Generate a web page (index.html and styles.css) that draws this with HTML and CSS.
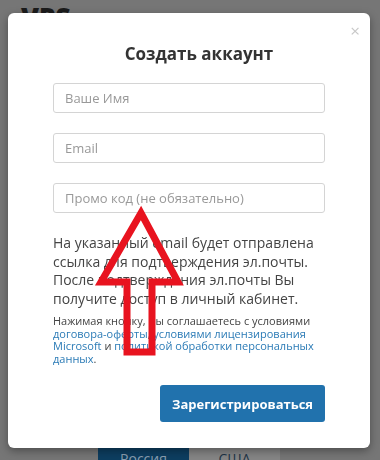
FILE: index.html
```html
<!DOCTYPE html>
<html lang="ru">
<head>
    <meta charset="UTF-8">
    <meta name="viewport" content="width=device-width, initial-scale=1.0">
    <title>Создать аккаунт</title>
    <link rel="stylesheet" href="styles.css">
</head>
<body>
    <div class="page">
        <div class="logo">VPS</div>
        <div class="tabs">
            <div class="tab active">Россия</div>
            <div class="tab">США</div>
        </div>
    </div>

    <div class="overlay">
        <div class="modal">
            <span class="close">&times;</span>
            <h2>Создать аккаунт</h2>

            <form class="form">
                <input type="text" placeholder="Ваше Имя">
                <input type="email" placeholder="Email">
                <input type="text" placeholder="Промо код (не обязательно)">
            </form>

            <p class="info">На указанный email будет отправлена ссылка для подтверждения эл.почты. После подтверждения эл.почты Вы получите доступ в личный кабинет.</p>

            <p class="terms">Нажимая кнопку, Вы соглашаетесь с условиями <a href="#">договора-оферты</a>, <a href="#">условиями лицензирования Microsoft</a> и <a href="#">политикой обработки персональных данных</a>.</p>

            <div class="actions">
                <button type="button">Зарегистрироваться</button>
            </div>
        </div>

        <svg class="arrow" width="380" height="460" viewBox="0 0 380 460">
            <polygon points="141,213 101,282 127,282 127,352 152,352 152,282 178,282" fill="none" stroke="#e8131f" stroke-width="7" stroke-linejoin="miter" stroke-miterlimit="10"/>
        </svg>
    </div>
</body>
</html>
```

FILE: styles.css
```css
body {
    margin: 0;
    font-family: 'Open Sans', 'Noto Sans', sans-serif;
    background: #767676;
    width: 380px;
    height: 460px;
    overflow: hidden;
}

.page {
    height: 460px;
    display: flex;
    flex-direction: column;
    justify-content: space-between;
}

.logo {
    font-size: 26px;
    font-weight: 800;
    color: #1b1b1b;
    padding: 2px 0 0 21px;
    line-height: 30px;
}

.tabs {
    display: flex;
    padding-left: 98px;
}

.tab {
    width: 91px;
    height: 14px;
    background: #858585;
    color: #1d3447;
    font-size: 14px;
    line-height: 26px;
    text-align: center;
    overflow: hidden;
}

.tab.active {
    background: #0d3e60;
    color: #8a9fb0;
}

.overlay {
    position: fixed;
    inset: 0;
}

.modal {
    position: absolute;
    left: 8px;
    top: 13px;
    width: 362px;
    height: 435px;
    box-sizing: border-box;
    padding: 0 45px;
    background: #fff;
    border-radius: 6px;
    box-shadow: 0 3px 8px rgba(0, 0, 0, 0.35);
}

.close {
    position: absolute;
    right: 10px;
    top: 6px;
    font-size: 17px;
    color: #c8c8c8;
}

h2 {
    margin: 29px 0 17px;
    padding-left: 20px;
    text-align: center;
    font-size: 17px;
    font-weight: 700;
    color: #333;
    line-height: 24px;
}

.form {
    display: flex;
    flex-direction: column;
    gap: 20px;
}

input {
    height: 30px;
    box-sizing: border-box;
    padding: 0 11px;
    border: 1px solid #d4d4d4;
    border-radius: 3px;
    font-family: inherit;
    font-size: 13px;
    color: #333;
}

input::placeholder {
    color: #999;
}

.info {
    margin: 21px 0 0;
    font-size: 14px;
    line-height: 18.6px;
    color: #444;
}

.terms {
    margin: 7px 0 0;
    font-size: 11px;
    line-height: 12.4px;
    color: #444;
}

.terms a {
    color: #2b7bb6;
    text-decoration: none;
}

.actions {
    display: flex;
    justify-content: flex-end;
    margin-top: 20px;
}

button {
    width: 165px;
    height: 37px;
    border: none;
    border-radius: 3px;
    background: #2172ad;
    color: #fff;
    font-family: inherit;
    font-size: 13px;
    font-weight: 700;
    cursor: pointer;
}

.arrow {
    position: absolute;
    left: 0;
    top: 0;
    pointer-events: none;
}
```
